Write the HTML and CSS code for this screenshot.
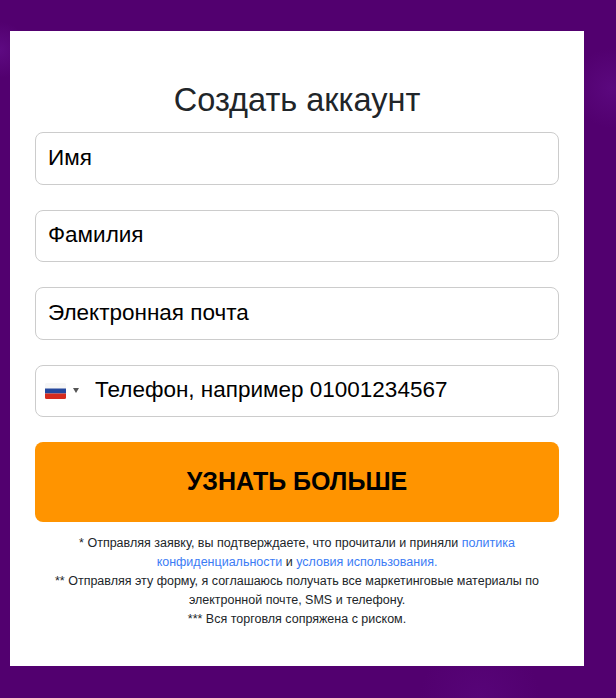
FILE: index.html
```html
<!DOCTYPE html>
<html lang="ru">
<head>
<meta charset="utf-8">
<title>Создать аккаунт</title>
<link rel="stylesheet" href="styles.css">
</head>
<body>
<main class="card">
  <h1 class="title">Создать аккаунт</h1>
  <form class="form">
    <input class="field" type="text" placeholder="Имя">
    <input class="field" type="text" placeholder="Фамилия">
    <input class="field" type="email" placeholder="Электронная почта">
    <div class="phone">
      <span class="flag-select">
        <svg class="flag" width="21" height="16" viewBox="0 0 21 16" aria-hidden="true">
          <rect width="21" height="16" rx="1.5" fill="#f6f6f6"/>
          <rect y="5.500" width="21" height="5" fill="#24479c"/>
          <path d="M0 10.500h21V14.500a1.500 1.500 0 0 1-1.500 1.500h-18A1.500 1.500 0 0 1 0 14.500z" fill="#d52b1e"/>
        </svg>
        <span class="caret"></span>
      </span>
      <input class="phone-input" type="tel" placeholder="Телефон, например 01001234567">
    </div>
    <button class="submit" type="button">УЗНАТЬ БОЛЬШЕ</button>
  </form>
  <div class="notes">
    <p>* Отправляя заявку, вы подтверждаете, что прочитали и приняли <a href="#">политика конфиденциальности</a> и <a href="#">условия использования.</a></p>
    <p>** Отправляя эту форму, я соглашаюсь получать все маркетинговые материалы по электронной почте, SMS и телефону.</p>
    <p>*** Вся торговля сопряжена с риском.</p>
  </div>
</main>
</body>
</html>
```
FILE: styles.css
```css
* { box-sizing: border-box; }
html, body { height: 100%; }
body {
  margin: 0;
  padding: 31px 32px 32px 10px;
  font-family: "Liberation Sans", Arial, sans-serif;
  background-color: #52006f;
  background-image:
    radial-gradient(circle at 612px 88px, #5b087e 0, rgba(91,8,126,0) 40px),
    radial-gradient(circle at 0 50px, #5e0a82 0, rgba(94,10,130,0) 28px),
    radial-gradient(circle at 480px 698px, #570478 0, rgba(87,4,120,0) 60px);
  overflow: hidden;
}
.card {
  background: #fff;
  height: 635px;
  padding: 48px 25px 0;
}
.title {
  margin: 0 0 11px;
  font-size: 32.500px;
  font-weight: 400;
  line-height: 42px;
  height: 42px;
  text-align: center;
  color: #212529;
}
.form { display: flex; flex-direction: column; }
.field, .phone {
  width: 100%;
  height: 52.500px;
  margin-bottom: 25px;
  border: 1px solid #ccc;
  border-radius: 8px;
  background: #fff;
}
.field, .phone-input {
  font-family: inherit;
  font-size: 22.500px;
  color: #000;
  outline: none;
}
.field { padding: 0 12px 1px; }
.field::placeholder, .phone-input::placeholder { color: #000; opacity: 1; }
.phone { display: flex; align-items: center; }
.flag-select { display: flex; align-items: center; gap: 7px; padding-left: 9px; width: 59px; flex: none; }
.flag { display: block; }
.caret {
  width: 0;
  height: 0;
  border-left: 3px solid transparent;
  border-right: 3px solid transparent;
  border-top: 5px solid #555;
  margin-bottom: 1px;
}
.phone-input { flex: 1; min-width: 0; height: 100%; border: 0; padding: 0 0 1px; background: transparent; }
.submit {
  height: 80px;
  border: 0;
  border-radius: 8px;
  padding: 0 0 2px;
  background: #ff9400;
  color: #000;
  font-family: inherit;
  font-size: 25px;
  font-weight: 700;
}
.notes {
  margin-top: 12px;
  padding: 0 10px;
  text-align: center;
  font-size: 12.500px;
  line-height: 19px;
  color: #212529;
}
.notes p { margin: 0; }
.notes a { color: #3b7cf5; text-decoration: none; }
```
